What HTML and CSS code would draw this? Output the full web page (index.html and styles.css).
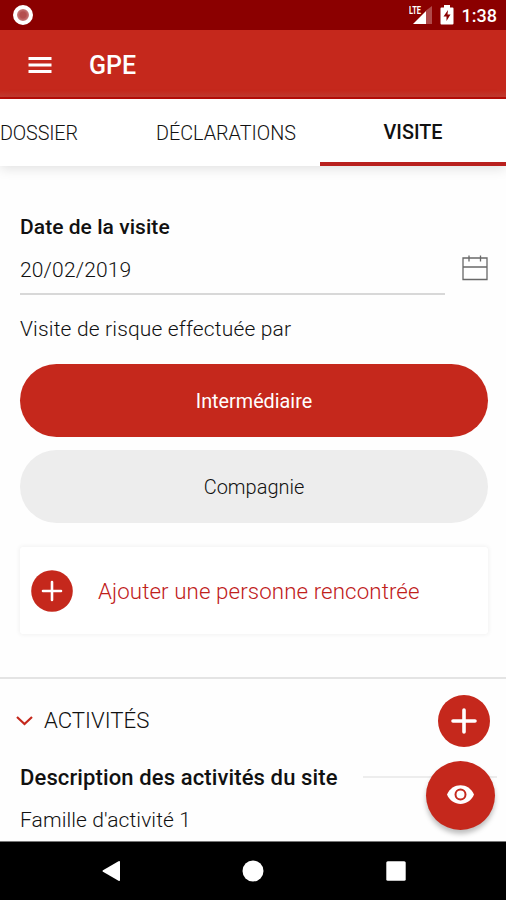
FILE: index.html
```html
<!DOCTYPE html>
<html lang="fr">
<head>
<meta charset="utf-8">
<title>GPE</title>
<link rel="stylesheet" href="styles.css">
</head>
<body>
<div class="screen">
  <div class="status">
    <span class="recorder"></span>
    <span class="status-right">
      <svg class="signal" width="24" height="22" viewBox="0 0 24 22"><path d="M17 6.500 23 2v18h-6z" fill="#b04a4a"/><path d="M4 20 17 7v13z" fill="#fff"/><text x="0" y="9.500" class="lte" textLength="12" lengthAdjust="spacingAndGlyphs">LTE</text></svg>
      <svg class="battery" width="14" height="20" viewBox="0 0 14 20"><path d="M1.500 2.500H4V0h6v2.500h2.500q1 0 1 1v15q0 1-1 1h-11q-1 0-1-1v-15q0-1 1-1z" fill="#fff"/><path d="M8 5 3.500 11.500h3V16L10.500 9.500h-3z" fill="#8b0000"/></svg>
      <span class="clock">1:38</span>
    </span>
  </div>
  <header class="appbar">
    <svg width="24" height="18" viewBox="0 0 24 18"><path d="M.5 2.500h23M.5 9h23M.5 15.500h23" stroke="#fff" stroke-width="3"/></svg>
    <h1 class="title">GPE</h1>
  </header>
  <nav class="tabs">
    <div class="tab tab-first">DOSSIER</div>
    <div class="tab">DÉCLARATIONS</div>
    <div class="tab tab-active">VISITE</div>
  </nav>
  <main class="content">
    <div class="label">Date de la visite</div>
    <div class="date-row">
      <div class="date-input">20/02/2019</div>
      <svg class="calendar" width="26" height="26" viewBox="0 0 26 26" fill="none" stroke="#686868" stroke-width="1.300"><path d="M1 3h24v21.500H1zM1 12h24M7 .5v6M18.500 .5v6"/></svg>
    </div>
    <div class="question">Visite de risque effectuée par</div>
    <div class="choice choice-on">Intermédiaire</div>
    <div class="choice">Compagnie</div>
    <div class="card">
      <svg width="42" height="42" viewBox="0 0 42 42"><circle cx="21" cy="21" r="20.800" fill="#c5281c"/><path d="M12 21h18M21 12v18" stroke="#fff" stroke-width="2.600" stroke-linecap="round"/></svg>
      <span class="card-text">Ajouter une personne rencontrée</span>
    </div>
  </main>
  <section class="activities">
    <div class="section-head">
      <svg width="17" height="10" viewBox="0 0 17 10"><path d="m1 1 7.500 7L16 1" fill="none" stroke="#c5281c" stroke-width="2.200"/></svg>
      <span class="section-title">ACTIVITÉS</span>
      <svg class="add" width="52" height="52" viewBox="0 0 52 52"><circle cx="26" cy="26" r="26" fill="#c5281c"/><path d="M15 26h22M26 15v22" stroke="#fff" stroke-width="3.600" stroke-linecap="round"/></svg>
    </div>
    <div class="sub-head"><span>Description des activités du site</span><span class="rule"></span></div>
    <div class="family">Famille d'activité 1</div>
    <div class="fab"><svg width="27" height="19" viewBox="0 0 27 19"><path d="M0 9.500C5-3 22-3 27 9.500 22 22 5 22 0 9.500z" fill="#fff"/><circle cx="13.500" cy="9.500" r="5" fill="none" stroke="#c5281c" stroke-width="2"/></svg></div>
  </section>
  <footer class="navbar">
    <svg width="20" height="22" viewBox="0 0 20 22"><path d="M2 10.200 17.500 1.300q1.500-.7 1.500.7v18q0 1.400-1.500.7L2 11.800q-1.200-.8 0-1.600z" fill="#fff"/></svg>
    <svg width="22" height="22" viewBox="0 0 22 22"><circle cx="11" cy="11" r="10.500" fill="#fff"/></svg>
    <svg width="20" height="20" viewBox="0 0 20 20"><rect x=".3" y=".3" width="19.400" height="19.400" rx="1.500" fill="#fff"/></svg>
  </footer>
</div>
</body>
</html>
```
FILE: styles.css
```css
* { box-sizing: border-box; }
body { margin: 0; font-family: Roboto, "Liberation Sans", sans-serif; color: #111; }
svg { display: block; flex: none; }
.screen { width: 506px; height: 900px; overflow: hidden; background: #fefefe; display: flex; flex-direction: column; font-size: 20px; font-weight: 300; white-space: nowrap; }
.status { flex: none; height: 30px; background: #8b0000; display: flex; justify-content: space-between; align-items: center; padding: 0 9px 0 13px; }
.recorder { width: 20px; height: 20px; border-radius: 50%; border: 4px solid #fff; background: radial-gradient(circle, #b45050 35%, #dca5a5 100%); }
.status-right { display: flex; align-items: center; color: #fff; }
.signal { margin-right: 7px; }
.battery { margin-right: 8px; }
.lte { font: bold 10px Roboto, sans-serif; fill: #fff; }
.clock { font-size: 18px; font-weight: 500; line-height: 30px; padding-top: 2px; }
.appbar { flex: none; height: 69px; background: linear-gradient(#c5281c 60px, #c43b30 67px, #b90d08 67px); display: flex; align-items: center; padding: 0 28px 0; gap: 37px; }
.title { margin: 0; color: #fff; font-size: 25px; font-weight: 500; line-height: 30px; padding-top: 2px; }
.tabs { flex: none; height: 67px; background: #fff; display: grid; grid-template-columns: 132px 188px 186px; box-shadow: 0 2px 12px rgba(0,0,0,.13); }
.tab { display: flex; align-items: center; justify-content: center; padding-top: 1px; font-size: 19.800px; }
.tab-first { justify-content: flex-start; letter-spacing: -.15px; }
.tab-active { border-bottom: 4px solid #b9201e; font-weight: 500; padding-top: 4px; }
.content { flex: none; height: 513px; padding: 48px 18px 0 20px; border-bottom: 2px solid #e4e4e4; }
.label { height: 26px; line-height: 26px; font-weight: 500; font-size: 21px; letter-spacing: .05px; }
.date-row { display: flex; justify-content: space-between; height: 56px; }
.date-input { width: 425px; height: 55px; border-bottom: 2px solid #d8d8d8; line-height: 61px; font-size: 21px; letter-spacing: .15px; }
.calendar { margin-top: 15px; }
.question { height: 68px; line-height: 67px; font-size: 21px; letter-spacing: .16px; }
.choice { height: 73px; border-radius: 37px; background: #ededed; display: flex; align-items: center; justify-content: center; margin-bottom: 13px; padding-top: 1px; }
.choice-on { background: #c5281c; color: #fff; font-weight: 400; font-size: 19.800px; padding-top: 2px; }
.card { height: 87px; margin-top: 24px; background: #fff; border-radius: 3px; box-shadow: 0 0 4px 1px rgba(0,0,0,.05); display: flex; align-items: center; gap: 25px; padding-left: 11px; color: #c0201a; }
.card-text { font-size: 22.300px; letter-spacing: .1px; }
.activities { flex: none; position: relative; height: 162px; }
.section-head { display: flex; align-items: center; height: 84px; padding: 0 16px; gap: 11px; }
.section-title { font-size: 22.200px; padding-bottom: 2px; }
.add { margin-left: auto; }
.sub-head { display: flex; align-items: center; justify-content: space-between; height: 28px; padding: 0 9px 0 20px; font-weight: 500; font-size: 22px; letter-spacing: .12px; }
.rule { width: 134px; height: 2px; background: #ededed; }
.family { padding-left: 20px; line-height: 58px; font-size: 21px; letter-spacing: .1px; }
.fab { position: absolute; left: 426px; top: 82px; width: 69px; height: 69px; border-radius: 50%; background: #c5281c; box-shadow: 0 4px 5px rgba(0,0,0,.25); display: flex; align-items: center; justify-content: center; padding-bottom: 3px; }
.navbar { flex: none; height: 59px; background: #000; border-top: 1px solid #777; display: grid; grid-template-columns: 142px 142px 144px; padding-left: 40px; justify-items: center; align-items: center; }
```
